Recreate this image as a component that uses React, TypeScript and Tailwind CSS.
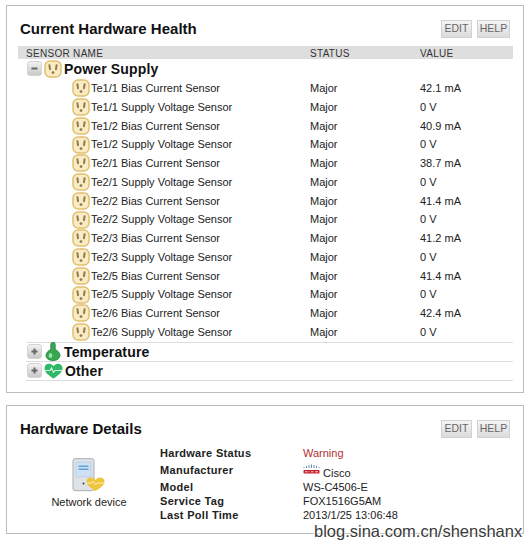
import type { ReactNode } from "react";

const sensors = [
  ["Te1/1 Bias Current Sensor", "42.1 mA"],
  ["Te1/1 Supply Voltage Sensor", "0 V"],
  ["Te1/2 Bias Current Sensor", "40.9 mA"],
  ["Te1/2 Supply Voltage Sensor", "0 V"],
  ["Te2/1 Bias Current Sensor", "38.7 mA"],
  ["Te2/1 Supply Voltage Sensor", "0 V"],
  ["Te2/2 Bias Current Sensor", "41.4 mA"],
  ["Te2/2 Supply Voltage Sensor", "0 V"],
  ["Te2/3 Bias Current Sensor", "41.2 mA"],
  ["Te2/3 Supply Voltage Sensor", "0 V"],
  ["Te2/5 Bias Current Sensor", "41.4 mA"],
  ["Te2/5 Supply Voltage Sensor", "0 V"],
  ["Te2/6 Bias Current Sensor", "42.4 mA"],
  ["Te2/6 Supply Voltage Sensor", "0 V"],
];

function Outlet() {
  return (
    <svg width="18" height="18" viewBox="0 0 18 18" className="shrink-0">
      <rect x="1" y="1" width="16" height="16" rx="5" fill="#f9ebc4" stroke="#e2bf70" strokeWidth="1.5" />
      <path d="M5.400 5.200l.6 4M12.600 5.200l-.6 4" stroke="#94794a" strokeWidth="2" strokeLinecap="round" />
      <circle cx="9" cy="12.600" r="1.400" fill="#94794a" />
    </svg>
  );
}

function Toggle({ open }: { open?: boolean }) {
  return (
    <div className="w-[15px] h-[15px] shrink-0 rounded-[3px] border border-[#d4d4d4] bg-gradient-to-b from-[#f2f2f2] to-[#c9c9c9] flex items-center justify-center">
      <svg width="7" height="7" viewBox="0 0 7 7">
        <rect x="0.5" y="2.5" width="6" height="2" fill="#666" />
        {!open && <rect x="2.5" y="0.5" width="2" height="6" fill="#666" />}
      </svg>
    </div>
  );
}

function Thermometer() {
  return (
    <svg width="18" height="19" viewBox="0 0 18 19" className="shrink-0">
      <path
        d="M6.800 2.500a2.200 2.200 0 0 1 4.400 0V7.500c2.600 1.300 4.800 3.200 4.800 6 0 3-3.200 5-7 5s-7-2-7-5c0-2.800 2.200-4.700 4.800-6z"
        fill="#38a850"
        stroke="#217f3a"
        strokeWidth="0.800"
      />
      <ellipse cx="6.500" cy="13.500" rx="1.800" ry="2.600" fill="#9be3ad" />
    </svg>
  );
}

function Heart() {
  return (
    <svg width="19" height="16" viewBox="0 0 19 16" className="shrink-0">
      <path
        d="M9.5 15.500C5 12.500.5 9.500.5 5.200.5 2.500 2.600.800 5 .800c2 0 3.500 1 4.500 2.400C10.500 1.800 12 .800 14 .800c2.400 0 4.500 1.700 4.500 4.400 0 4.300-4.500 7.300-9 10.300z"
        fill="#2fb865"
      />
      <path d="M1 7.500h5l1.500-2.500 2 4.500 1.500-2h7" fill="none" stroke="#d8f5df" strokeWidth="1.100" />
    </svg>
  );
}

function DeviceIcon() {
  return (
    <svg width="34" height="34" viewBox="0 0 34 34">
      <rect x="1" y="0.700" width="21" height="32" rx="2" fill="#dfe3e8" stroke="#a9aeb4" />
      <rect x="4" y="4" width="15" height="15" fill="#cfe2f5" stroke="#b3c4d4" strokeWidth="0.600" />
      <rect x="6.500" y="7.500" width="10" height="1.400" fill="#5e9bd4" />
      <rect x="6.500" y="10.500" width="10" height="1.400" fill="#5e9bd4" />
      <circle cx="11.500" cy="25.500" r="1" fill="#444" />
      <path
        d="M23.500 33c-3-1.900-9-5.400-9-9.500 0-2.500 2-4 4.200-4 2.100 0 3.800 1 4.800 2.500 1-1.500 2.700-2.500 4.800-2.500 2.200 0 4.200 1.500 4.200 4 0 4.100-6 7.600-9 9.500z"
        fill="#eec53d"
      />
      <path d="M15 25h5l1.500-2 2 4 1.500-2h7" fill="none" stroke="#fbeeb0" strokeWidth="1" />
    </svg>
  );
}

function CiscoLogo() {
  return (
    <svg width="17" height="11" viewBox="0 0 17 11" className="block mb-[4px]">
      <path d="M1 3v1M3.500 2v2M6 1v3M8.500 0.500v3.500M11 1v3M13.500 2v2M16 3v1" stroke="#4a7fa8" strokeWidth="0.900" />
      <rect x="0.500" y="6" width="16" height="3.600" rx="0.800" fill="#c4202f" />
      <path d="M2 7.800h2.500M5.500 7.800h1M8 7.800h2.500M12 7.800h3" stroke="#f7d4d4" strokeWidth="1" />
    </svg>
  );
}

function PanelHeader({ title }: { title: string }) {
  return (
    <div className="flex items-center justify-between h-[18px] pl-[2px] pr-[3px]">
      <h2 className="text-[15px] font-bold text-[#111] leading-none pb-[2px]">{title}</h2>
      <div className="flex gap-[5px]">
        <button className="w-[31px] h-[18px] border border-[#d2d2d2] bg-gradient-to-b from-[#f4f4f4] to-[#dcdcdc] text-[10.5px] text-[#666]">
          EDIT
        </button>
        <button className="w-[33px] h-[18px] border border-[#d2d2d2] bg-gradient-to-b from-[#f4f4f4] to-[#dcdcdc] text-[10.5px] text-[#666]">
          HELP
        </button>
      </div>
    </div>
  );
}

function GroupRow({ icon, label, open, divider }: { icon: ReactNode; label: string; open?: boolean; divider?: boolean }) {
  return (
    <div className={`flex items-center h-[19px] ml-[8px] pl-[1px] gap-[2px] ${divider ? "border-b border-[#dcdcdc]" : ""}`}>
      <Toggle open={open} />
      {icon}
      <span className="text-[14px] font-bold text-[#111] tracking-[0.15px] leading-none">{label}</span>
    </div>
  );
}

function Detail({ label, className, children }: { label: string; className: string; children: ReactNode }) {
  return (
    <div className={`flex items-center ${className}`}>
      <span className="w-[143px] text-[11px] font-bold text-[#222] tracking-[0.3px]">{label}</span>
      {children}
    </div>
  );
}

export default function App() {
  return (
    <div className="relative w-[530px] h-[545px] bg-white overflow-hidden pt-[5px] pl-[6px] font-['Liberation_Sans',Arial,sans-serif]">
      <section className="w-[518px] h-[388px] border border-[#bdbdbd] pt-[14px] pl-[11px] pr-[10px]">
        <PanelHeader title="Current Hardware Health" />
        <div className="grid grid-cols-[284px_110px_1fr] items-center h-[13px] mt-[8px] pl-[8px] bg-[#dedede] text-[10px] tracking-[0.3px] text-[#333]">
          <span>SENSOR NAME</span>
          <span>STATUS</span>
          <span>VALUE</span>
        </div>
        <div className="pb-px">
          <GroupRow open icon={<Outlet />} label="Power Supply" />
        </div>
        <div className="border-b border-[#dcdcdc] ml-[8px]">
          {sensors.map(([name, value]) => (
            <div key={name} className="grid grid-cols-[284px_110px_1fr] items-center h-[18.750px] text-[11px] text-[#222]">
              <div className="flex items-center gap-px pl-[46px]">
                <Outlet />
                <span>{name}</span>
              </div>
              <span>Major</span>
              <span>{value}</span>
            </div>
          ))}
        </div>
        <GroupRow divider icon={<Thermometer />} label="Temperature" />
        <GroupRow divider icon={<Heart />} label="Other" />
      </section>

      <section className="w-[518px] h-[129px] mt-[12px] border border-[#bdbdbd] pt-[14px] pl-[11px] pr-[10px]">
        <PanelHeader title="Hardware Details" />
        <div className="flex mt-[7px]">
          <div className="w-[142px] flex flex-col items-center pt-[13px]">
            <DeviceIcon />
            <span className="mt-[2px] text-[11px] text-[#222]">Network device</span>
          </div>
          <div className="text-[11px] text-[#222]">
            <Detail label="Hardware Status" className="h-[17px]">
              <span className="text-[#b03030]">Warning</span>
            </Detail>
            <Detail label="Manufacturer" className="h-[17px]">
              <span className="flex items-end gap-[3px] self-end">
                <CiscoLogo />
                <span className="leading-none">Cisco</span>
              </span>
            </Detail>
            <Detail label="Model" className="h-[16px]">
              <span>WS-C4506-E</span>
            </Detail>
            <Detail label="Service Tag" className="h-[12px]">
              <span>FOX1516G5AM</span>
            </Detail>
            <Detail label="Last Poll Time" className="h-[16px]">
              <span>2013/1/25 13:06:48</span>
            </Detail>
          </div>
        </div>
      </section>

      <span className="absolute left-[314px] top-[520px] text-[16.500px] leading-[22px] text-[#3a3a3a] whitespace-nowrap [text-shadow:0_0_2px_#fff,0_0_2px_#fff,0_0_3px_#fff]">
        blog.sina.com.cn/shenshanx
      </span>
    </div>
  );
}
